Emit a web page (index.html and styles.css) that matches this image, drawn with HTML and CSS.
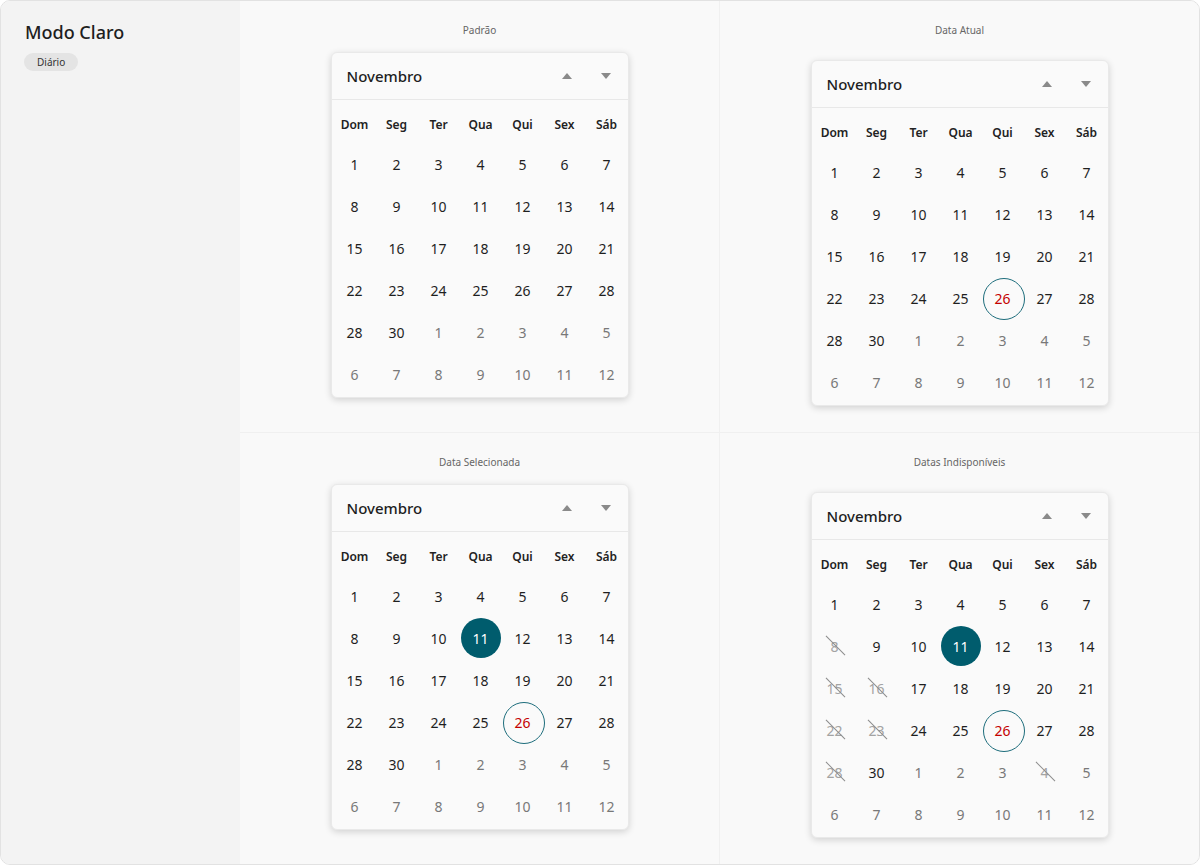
FILE: index.html
```html
<!DOCTYPE html>
<html lang="pt-BR">
<head>
<meta charset="utf-8">
<title>Modo Claro</title>
<link rel="stylesheet" href="styles.css">
</head>
<body>
<div class="frame">
  <aside class="side">
    <h1 class="side-title">Modo Claro</h1>
    <span class="badge">Diário</span>
  </aside>
  <main class="board">
    <section class="cell">
      <div class="caption">Padrão</div>
      <div class="cal">
        <div class="cal-head"><span class="month">Novembro</span><span class="nav"><span class="arrow up"></span><span class="arrow down"></span></span></div>
        <div class="grid">
          <span class="wd">Dom</span><span class="wd">Seg</span><span class="wd">Ter</span><span class="wd">Qua</span><span class="wd">Qui</span><span class="wd">Sex</span><span class="wd">Sáb</span>
          <span class="d">1</span><span class="d">2</span><span class="d">3</span><span class="d">4</span><span class="d">5</span><span class="d">6</span><span class="d">7</span>
          <span class="d">8</span><span class="d">9</span><span class="d">10</span><span class="d">11</span><span class="d">12</span><span class="d">13</span><span class="d">14</span>
          <span class="d">15</span><span class="d">16</span><span class="d">17</span><span class="d">18</span><span class="d">19</span><span class="d">20</span><span class="d">21</span>
          <span class="d">22</span><span class="d">23</span><span class="d">24</span><span class="d">25</span><span class="d">26</span><span class="d">27</span><span class="d">28</span>
          <span class="d">28</span><span class="d">30</span><span class="d o">1</span><span class="d o">2</span><span class="d o">3</span><span class="d o">4</span><span class="d o">5</span>
          <span class="d o">6</span><span class="d o">7</span><span class="d o">8</span><span class="d o">9</span><span class="d o">10</span><span class="d o">11</span><span class="d o">12</span>
        </div>
      </div>
    </section>
    <section class="cell cell-right">
      <div class="caption">Data Atual</div>
      <div class="cal">
        <div class="cal-head"><span class="month">Novembro</span><span class="nav"><span class="arrow up"></span><span class="arrow down"></span></span></div>
        <div class="grid">
          <span class="wd">Dom</span><span class="wd">Seg</span><span class="wd">Ter</span><span class="wd">Qua</span><span class="wd">Qui</span><span class="wd">Sex</span><span class="wd">Sáb</span>
          <span class="d">1</span><span class="d">2</span><span class="d">3</span><span class="d">4</span><span class="d">5</span><span class="d">6</span><span class="d">7</span>
          <span class="d">8</span><span class="d">9</span><span class="d">10</span><span class="d">11</span><span class="d">12</span><span class="d">13</span><span class="d">14</span>
          <span class="d">15</span><span class="d">16</span><span class="d">17</span><span class="d">18</span><span class="d">19</span><span class="d">20</span><span class="d">21</span>
          <span class="d">22</span><span class="d">23</span><span class="d">24</span><span class="d">25</span><span class="d t">26</span><span class="d">27</span><span class="d">28</span>
          <span class="d">28</span><span class="d">30</span><span class="d o">1</span><span class="d o">2</span><span class="d o">3</span><span class="d o">4</span><span class="d o">5</span>
          <span class="d o">6</span><span class="d o">7</span><span class="d o">8</span><span class="d o">9</span><span class="d o">10</span><span class="d o">11</span><span class="d o">12</span>
        </div>
      </div>
    </section>
    <section class="cell">
      <div class="caption">Data Selecionada</div>
      <div class="cal">
        <div class="cal-head"><span class="month">Novembro</span><span class="nav"><span class="arrow up"></span><span class="arrow down"></span></span></div>
        <div class="grid">
          <span class="wd">Dom</span><span class="wd">Seg</span><span class="wd">Ter</span><span class="wd">Qua</span><span class="wd">Qui</span><span class="wd">Sex</span><span class="wd">Sáb</span>
          <span class="d">1</span><span class="d">2</span><span class="d">3</span><span class="d">4</span><span class="d">5</span><span class="d">6</span><span class="d">7</span>
          <span class="d">8</span><span class="d">9</span><span class="d">10</span><span class="d s">11</span><span class="d">12</span><span class="d">13</span><span class="d">14</span>
          <span class="d">15</span><span class="d">16</span><span class="d">17</span><span class="d">18</span><span class="d">19</span><span class="d">20</span><span class="d">21</span>
          <span class="d">22</span><span class="d">23</span><span class="d">24</span><span class="d">25</span><span class="d t">26</span><span class="d">27</span><span class="d">28</span>
          <span class="d">28</span><span class="d">30</span><span class="d o">1</span><span class="d o">2</span><span class="d o">3</span><span class="d o">4</span><span class="d o">5</span>
          <span class="d o">6</span><span class="d o">7</span><span class="d o">8</span><span class="d o">9</span><span class="d o">10</span><span class="d o">11</span><span class="d o">12</span>
        </div>
      </div>
    </section>
    <section class="cell cell-right">
      <div class="caption">Datas Indisponíveis</div>
      <div class="cal">
        <div class="cal-head"><span class="month">Novembro</span><span class="nav"><span class="arrow up"></span><span class="arrow down"></span></span></div>
        <div class="grid">
          <span class="wd">Dom</span><span class="wd">Seg</span><span class="wd">Ter</span><span class="wd">Qua</span><span class="wd">Qui</span><span class="wd">Sex</span><span class="wd">Sáb</span>
          <span class="d">1</span><span class="d">2</span><span class="d">3</span><span class="d">4</span><span class="d">5</span><span class="d">6</span><span class="d">7</span>
          <span class="d x">8</span><span class="d">9</span><span class="d">10</span><span class="d s">11</span><span class="d">12</span><span class="d">13</span><span class="d">14</span>
          <span class="d x">15</span><span class="d x">16</span><span class="d">17</span><span class="d">18</span><span class="d">19</span><span class="d">20</span><span class="d">21</span>
          <span class="d x">22</span><span class="d x">23</span><span class="d">24</span><span class="d">25</span><span class="d t">26</span><span class="d">27</span><span class="d">28</span>
          <span class="d x">28</span><span class="d">30</span><span class="d o">1</span><span class="d o">2</span><span class="d o">3</span><span class="d o x">4</span><span class="d o">5</span>
          <span class="d o">6</span><span class="d o">7</span><span class="d o">8</span><span class="d o">9</span><span class="d o">10</span><span class="d o">11</span><span class="d o">12</span>
        </div>
      </div>
    </section>
  </main>
</div>
</body>
</html>
```
FILE: styles.css
```css
* { box-sizing: border-box; }
html, body { margin: 0; padding: 0; background: #ffffff; }
body {
  font-family: "Noto Sans", "Open Sans", "Liberation Sans", sans-serif;
  color: #1f1f1f;
}
.frame {
  width: 1200px;
  height: 865px;
  border: 1px solid #e2e2e2;
  border-radius: 10px;
  overflow: hidden;
  display: flex;
  background: #f9f9f9;
}
.side {
  width: 239px;
  flex: none;
  background: #f3f3f3;
  padding: 18px 23px;
  display: flex;
  flex-direction: column;
  align-items: flex-start;
}
.side-title {
  margin: 0 0 8px 1px;
  font-size: 18px;
  font-weight: 500;
  line-height: 26px;
  color: #1e1e1e;
}
.badge {
  display: inline-block;
  height: 18px;
  line-height: 18px;
  padding: 0 13px;
  font-size: 10px;
  color: #333;
  background: #e4e4e4;
  border-radius: 9px;
}
.board {
  flex: 1;
  display: grid;
  grid-template-columns: 1fr 1fr;
  grid-template-rows: 1fr 1fr;
  gap: 1px;
  background: #f0f0f0;
}
.cell {
  background: #f9f9f9;
  display: flex;
  flex-direction: column;
  align-items: center;
  padding-top: 22px;
}
.caption {
  font-size: 10px;
  line-height: 14px;
  color: #666;
  margin-bottom: 15px;
}
.cell-right .caption { margin-bottom: 23px; }
.cal {
  width: 298px;
  background: #fafafa;
  border: 1px solid #e9e9e9;
  border-radius: 6px;
  box-shadow: 0 2px 7px rgba(0, 0, 0, 0.16);
}
.cal-head {
  height: 47px;
  border-bottom: 1px solid #e8e8e8;
  display: flex;
  align-items: center;
  justify-content: space-between;
  padding: 0 10px 0 15px;
}
.month {
  font-size: 15px;
  font-weight: 500;
  color: #1e1e1e;
}
.nav { display: flex; gap: 15px; }
.arrow {
  width: 24px;
  height: 24px;
  display: flex;
  align-items: center;
  justify-content: center;
}
.arrow::before {
  content: "";
  width: 0;
  height: 0;
  border-left: 5px solid transparent;
  border-right: 5px solid transparent;
}
.arrow.up::before { border-bottom: 6px solid #8a8a8a; }
.arrow.down::before { border-top: 6px solid #8a8a8a; }
.grid {
  display: grid;
  grid-template-columns: repeat(7, 42px);
  grid-template-rows: 37px repeat(6, 42px);
  padding: 6px 0 2px 2px;
}
.wd {
  display: flex;
  align-items: center;
  justify-content: center;
  font-size: 12px;
  font-weight: 600;
  color: #222;
}
.d {
  position: relative;
  z-index: 0;
  display: flex;
  align-items: center;
  justify-content: center;
  font-size: 14px;
  color: #1f1f1f;
}
.d.o { color: #787878; }
.d.t::before,
.d.s::before {
  content: "";
  position: absolute;
  left: 1px;
  top: 1px;
  width: 40px;
  height: 40px;
  border-radius: 50%;
  z-index: -1;
}
.d.t { color: #c40000; }
.d.t::before { border: 1px solid #1d6d7c; }
.d.s { color: #ffffff; }
.d.s::before { background: #005c6d; }
.d.x { color: #a3a3a3; }
.d.x::after {
  content: "";
  position: absolute;
  left: 8px;
  top: 20px;
  width: 27px;
  height: 1px;
  background: #8c8c8c;
  transform: rotate(45deg);
}
```
